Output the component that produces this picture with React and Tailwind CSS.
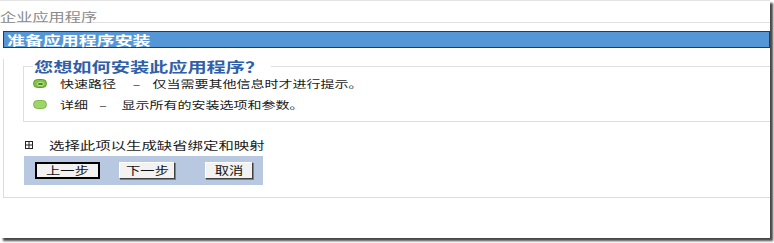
import React from "react";

const Wide = ({ children, className = "" }) => (
  <span className={`inline-block origin-left scale-x-[1.4] whitespace-pre ${className}`}>
    {children}
  </span>
);

const Radio = ({ checked }) => (
  <span
    className={`w-[14px] h-[9px] rounded-full flex items-center justify-center shrink-0 ${
      checked
        ? "bg-[#86c04f] border border-[#5f9a2c]"
        : "bg-[#9fd46a] border border-[#7fb54b]"
    }`}
  >
    {checked && (
      <span className="w-[7px] h-[4px] rounded-full bg-[#4d8a1e] border border-[#b9e58e]" />
    )}
  </span>
);

const Btn = ({ children, main, w }) => (
  <button
    className={`h-[17px] ${w} bg-[#f2f2f2] flex items-center justify-center text-[11px] leading-none text-[#111] ${
      main
        ? "border-2 border-black"
        : "border border-t-[#ffffff] border-l-[#ffffff] border-r-[#404040] border-b-[#404040] shadow-[1px_1px_0_#808080]"
    }`}
  >
    <span className="inline-block scale-x-[1.3] whitespace-pre">{children}</span>
  </button>
);

export default function App() {
  return (
    <div className="w-[774px] h-[243px] bg-white font-['Noto_Sans_CJK_SC',sans-serif] overflow-hidden">
      <div className="w-[770px] h-[238px] bg-white border-t border-[#e4e4e4] shadow-[3px_3px_2px_rgba(40,40,40,0.85)]">
        {/* page title */}
        <div className="h-[22px] flex items-end border-b border-[#e0e0e0]">
          <Wide className="text-[12px] leading-[10px] text-[#8a8a8a] scale-x-[1.35]">企业应用程序</Wide>
        </div>

        {/* blue heading */}
        <div className="mt-[8px] ml-[3px] h-[17px] bg-[#5596d6] border border-[#2b3a4f] flex items-center pl-[3px]">
          <Wide className="text-[13px] leading-[15px] font-bold text-white scale-x-[1.38]">准备应用程序安装</Wide>
        </div>

        {/* panel */}
        <div className="ml-[3px] border-l border-b border-[#dcdcdc] pl-[19px] pb-[12px]">
          <fieldset className="mt-[11px] border-t border-l border-b border-[#dedede] pb-[6px]">
            <legend className="ml-[9px] px-[1px] w-[238px] h-[14px] flex items-center text-[14px] leading-[14px]">
              <Wide className="text-[14px] leading-[14px] font-bold text-[#2f5fa8] scale-x-[1.37]">您想如何安装此应用程序？</Wide>
            </legend>
            <div className="h-[21px] flex items-center pl-[9px] gap-[13px]">
              <Radio checked />
              <Wide className="text-[10px] leading-[12px] text-[#1a1a1a]">
                快速路径<span className="inline-block w-[26px] pl-[12px]">–</span>仅当需要其他信息时才进行提示。
              </Wide>
            </div>
            <div className="h-[21px] flex items-center pl-[9px] gap-[13px]">
              <Radio />
              <Wide className="text-[10px] leading-[12px] text-[#1a1a1a]">
                详细<span className="inline-block w-[24px] pl-[8px]">–</span>显示所有的安装选项和参数。
              </Wide>
            </div>
          </fieldset>

          {/* option row */}
          <div className="mt-[15px] h-[16px] flex items-center pl-[2px] gap-[16px]">
            <svg width="8" height="8" viewBox="0 0 8 8" className="shrink-0">
              <rect x="0.5" y="0.5" width="7" height="7" fill="none" stroke="#222" />
              <path d="M4 1v6M1 4h6" stroke="#222" />
            </svg>
            <Wide className="text-[11px] leading-[12px] text-[#1a1a1a]">选择此项以生成缺省绑定和映射</Wide>
          </div>

          {/* buttons */}
          <div className="mt-[3px] ml-[1px] w-[239px] h-[29px] bg-[#b8c8e1] flex items-center pl-[11px]">
            <Btn main w="w-[65px]">上一步</Btn>
            <div className="w-[19px]" />
            <Btn w="w-[56px]">下一步</Btn>
            <div className="w-[30px]" />
            <Btn w="w-[48px]">取消</Btn>
          </div>
        </div>
      </div>
    </div>
  );
}
